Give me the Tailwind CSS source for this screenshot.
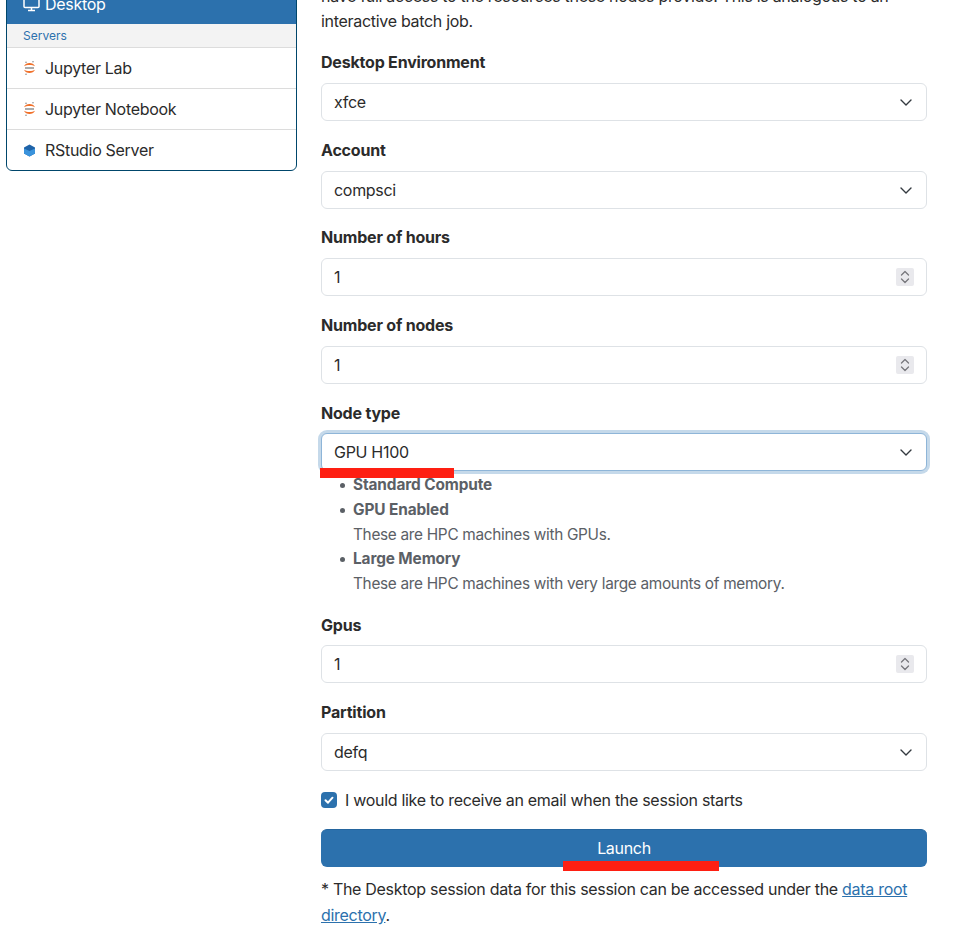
<!DOCTYPE html>
<html lang="en"><head><meta charset="utf-8"><title>Desktop</title>
<script src="https://cdn.jsdelivr.net/npm/@tailwindcss/browser@4"></script></head>
<body class="bg-white">
<div class="h-[928px] w-[959px] overflow-hidden font-['Inter','Liberation_Sans',sans-serif] text-[16px] tracking-[-0.3px] text-[#2b2b2b]">
<div class="flex items-start -mt-[16px]">
  <aside class="ml-[6px] w-[291px] shrink-0 rounded-b-[6px] border border-[#00466b] overflow-hidden">
    <div class="h-[39px] pb-[2px] bg-[#2c71ad] text-white flex items-center pl-[16px] gap-[5px]">
      <svg class="w-[17px] h-[16px]" viewBox="0 0 17 16" fill="none" stroke="#fff" stroke-width="1.500"><rect x="1" y="1.500" width="15" height="10" rx="1"/><path d="M8.500 11.500v3M5 14.600h7"/></svg>
      <span>Desktop</span>
    </div>
    <div class="h-[24px] bg-[#f3f3f3] border-b border-[#dcdcdc] pl-[16px] text-[12px] tracking-normal text-[#2c71ad] flex items-center">Servers</div>
    <div class="h-[41px] border-b border-[#dcdcdc] flex items-center pl-[16px] gap-[9px]">
      <svg class="w-[13px] h-[16px]" viewBox="0 0 13 16"><path d="M1 6.200C3 1.800 10 1.800 12 6.200 9.500 4.600 3.500 4.600 1 6.200zM1 9.800C3 14.200 10 14.200 12 9.800 9.500 11.400 3.500 11.400 1 9.800z" fill="#f0702a"/><path d="M2 8h9" stroke="#8f8f8f" stroke-width="1.600"/><circle cx="3" cy="2.300" r=".7" fill="#777"/><circle cx="10" cy="1.800" r=".7" fill="#777"/><circle cx="3" cy="14.200" r=".7" fill="#777"/></svg>
      <span>Jupyter Lab</span>
    </div>
    <div class="h-[41px] border-b border-[#dcdcdc] flex items-center pl-[16px] gap-[9px]">
      <svg class="w-[13px] h-[16px]" viewBox="0 0 13 16"><path d="M1 6.200C3 1.800 10 1.800 12 6.200 9.500 4.600 3.500 4.600 1 6.200zM1 9.800C3 14.200 10 14.200 12 9.800 9.500 11.400 3.500 11.400 1 9.800z" fill="#f0702a"/><path d="M2 8h9" stroke="#8f8f8f" stroke-width="1.600"/><circle cx="3" cy="2.300" r=".7" fill="#777"/><circle cx="10" cy="1.800" r=".7" fill="#777"/><circle cx="3" cy="14.200" r=".7" fill="#777"/></svg>
      <span>Jupyter Notebook</span>
    </div>
    <div class="h-[40px] flex items-center pl-[16px] gap-[9px]">
      <svg class="w-[13px] h-[16px]" viewBox="0 0 13 16"><path d="M6.500 2.500l5.500 3v6l-5.500 3-5.500-3v-6z" fill="#1f63a8"/><path d="M1 6.500l5.500 2.500 5.500-2.500v5l-5.500 3-5.500-3z" fill="#3a93dc"/></svg>
      <span>RStudio Server</span>
    </div>
  </aside>
  <main class="ml-[24px] w-[606px] shrink-0">
    <p class="leading-[25px] mb-[16px]">have full access to the resources these nodes provide. This is analogous to an interactive batch job.</p>

    <label class="block font-bold tracking-[-0.2px] leading-[24px] mb-[9px]">Desktop Environment</label>
    <div class="relative mb-[17px]"><select class="appearance-none w-full h-[38px] rounded-[6px] border border-[#dee2e6] px-[12px] bg-white"><option>xfce</option></select><svg class="absolute right-[15px] top-[16px] w-[12px] h-[7px]" viewBox="0 0 12 7" fill="none" stroke="#343a40" stroke-width="1.400" stroke-linecap="round" stroke-linejoin="round"><path d="M1 1l5 5 5-5"/></svg></div>

    <label class="block font-bold tracking-[-0.2px] leading-[24px] mb-[9px]">Account</label>
    <div class="relative mb-[16px]"><select class="appearance-none w-full h-[38px] rounded-[6px] border border-[#dee2e6] px-[12px] bg-white"><option>compsci</option></select><svg class="absolute right-[15px] top-[16px] w-[12px] h-[7px]" viewBox="0 0 12 7" fill="none" stroke="#343a40" stroke-width="1.400" stroke-linecap="round" stroke-linejoin="round"><path d="M1 1l5 5 5-5"/></svg></div>

    <label class="block font-bold tracking-[-0.2px] leading-[24px] mb-[9px]">Number of hours</label>
    <div class="relative mb-[17px]"><input value="1" class="w-full h-[38px] rounded-[6px] border border-[#dee2e6] px-[12px]"><div class="absolute right-[13px] top-[10px] w-[18px] h-[18px] rounded-[2px] bg-[#e9e9ed] flex items-center justify-center"><svg class="w-[10px] h-[14px]" viewBox="0 0 10 14" fill="none" stroke="#77777c" stroke-width="1.300" stroke-linecap="round" stroke-linejoin="round"><path d="M1.500 5L5 1.500 8.500 5M1.500 9L5 12.500 8.500 9"/></svg></div></div>

    <label class="block font-bold tracking-[-0.2px] leading-[24px] mb-[9px]">Number of nodes</label>
    <div class="relative mb-[17px]"><input value="1" class="w-full h-[38px] rounded-[6px] border border-[#dee2e6] px-[12px]"><div class="absolute right-[13px] top-[10px] w-[18px] h-[18px] rounded-[2px] bg-[#e9e9ed] flex items-center justify-center"><svg class="w-[10px] h-[14px]" viewBox="0 0 10 14" fill="none" stroke="#77777c" stroke-width="1.300" stroke-linecap="round" stroke-linejoin="round"><path d="M1.500 5L5 1.500 8.500 5M1.500 9L5 12.500 8.500 9"/></svg></div></div>

    <label class="block font-bold tracking-[-0.2px] leading-[24px] mb-[8px]">Node type</label>
    <div class="relative"><select class="appearance-none w-full h-[38px] rounded-[6px] border border-[#8eb5d8] px-[12px] bg-white shadow-[0_0_0_3px_#c5d9ea]"><option>GPU H100</option></select><svg class="absolute right-[15px] top-[16px] w-[12px] h-[7px]" viewBox="0 0 12 7" fill="none" stroke="#343a40" stroke-width="1.400" stroke-linecap="round" stroke-linejoin="round"><path d="M1 1l5 5 5-5"/></svg><div class="absolute -left-[1px] top-[35px] w-[134px] h-[10px] bg-[#fe1f12]"></div></div>
    <ul class="mt-[1px] ml-[32px] text-[15.36px] leading-[24.8px] text-[#5b6066] mb-[16px] pt-[1px]">
      <li class="relative font-bold tracking-[-0.1px] before:absolute before:-left-[13px] before:top-[10px] before:w-[5px] before:h-[5px] before:rounded-full before:bg-[#5b6066]">Standard Compute</li>
      <li class="relative before:absolute before:-left-[13px] before:top-[10px] before:w-[5px] before:h-[5px] before:rounded-full before:bg-[#5b6066]"><span class="font-bold tracking-[-0.1px]">GPU Enabled</span><br>These are HPC machines with GPUs.</li>
      <li class="relative before:absolute before:-left-[13px] before:top-[10px] before:w-[5px] before:h-[5px] before:rounded-full before:bg-[#5b6066]"><span class="font-bold tracking-[-0.1px]">Large Memory</span><br>These are HPC machines with very large amounts of memory.</li>
    </ul>

    <label class="block font-bold tracking-[-0.2px] leading-[24px] mb-[8px]">Gpus</label>
    <div class="relative mb-[17px]"><input value="1" class="w-full h-[38px] rounded-[6px] border border-[#dee2e6] px-[12px]"><div class="absolute right-[13px] top-[10px] w-[18px] h-[18px] rounded-[2px] bg-[#e9e9ed] flex items-center justify-center"><svg class="w-[10px] h-[14px]" viewBox="0 0 10 14" fill="none" stroke="#77777c" stroke-width="1.300" stroke-linecap="round" stroke-linejoin="round"><path d="M1.500 5L5 1.500 8.500 5M1.500 9L5 12.500 8.500 9"/></svg></div></div>

    <label class="block font-bold tracking-[-0.2px] leading-[24px] mb-[9px]">Partition</label>
    <div class="relative mb-[19px]"><select class="appearance-none w-full h-[38px] rounded-[6px] border border-[#dee2e6] px-[12px] bg-white"><option>defq</option></select><svg class="absolute right-[15px] top-[16px] w-[12px] h-[7px]" viewBox="0 0 12 7" fill="none" stroke="#343a40" stroke-width="1.400" stroke-linecap="round" stroke-linejoin="round"><path d="M1 1l5 5 5-5"/></svg></div>

    <div class="flex items-center gap-[8px] h-[20px] mb-[19px]">
      <span class="w-[16px] h-[16px] rounded-[4px] bg-[#2c71ad] flex items-center justify-center"><svg class="w-[12px] h-[12px]" viewBox="0 0 12 12" fill="none" stroke="#fff" stroke-width="2" stroke-linecap="round" stroke-linejoin="round"><path d="M2.500 6.200l2.500 2.500 4.500-5"/></svg></span>
      <span>I would like to receive an email when the session starts</span>
    </div>

    <div class="relative mb-[9px]">
      <button class="block w-full h-[38px] rounded-[6px] bg-[#2c71ad] border-t border-[#24659e] text-white text-center">Launch</button>
      <div class="absolute left-[242px] top-[32px] w-[156px] h-[10px] bg-[#fe1f12]"></div>
    </div>
    <p class="leading-[26px]">* The Desktop session data for this session can be accessed under the <a href="#" class="text-[#2c71ad] underline">data root directory</a>.</p>
  </main>
</div>
</div>
</body></html>
